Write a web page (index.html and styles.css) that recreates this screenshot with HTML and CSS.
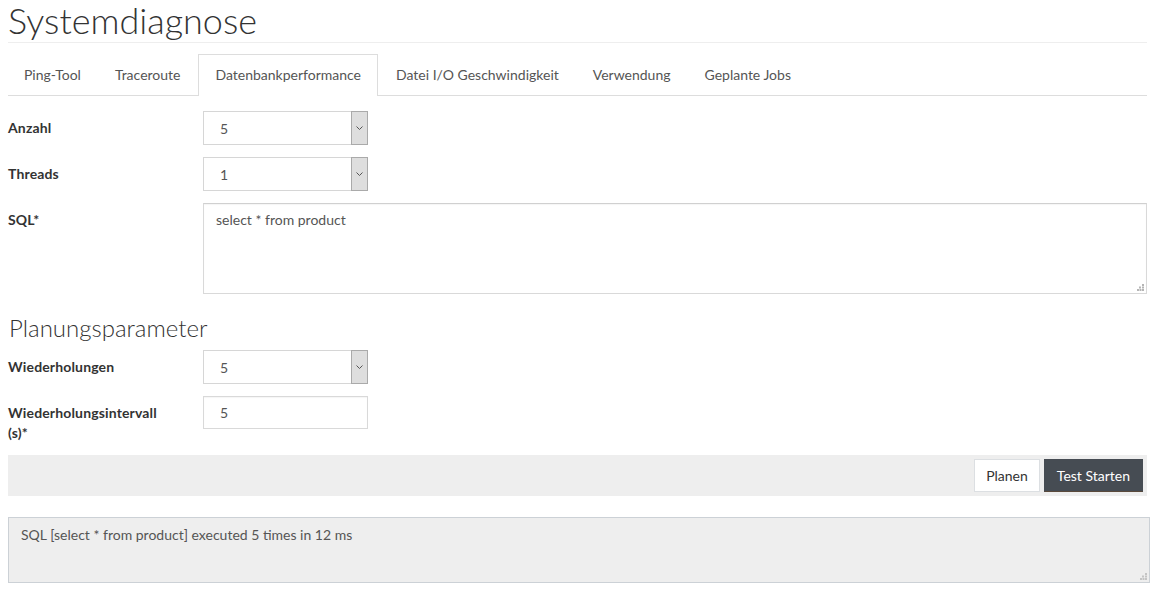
FILE: index.html
```html
<!DOCTYPE html>
<html lang="de">
<head>
<meta charset="utf-8">
<title>Systemdiagnose</title>
<link rel="stylesheet" href="styles.css">
</head>
<body>
<div class="page">
  <h1 class="title">Systemdiagnose</h1>
  <ul class="tabs">
    <li><a>Ping-Tool</a></li>
    <li><a>Traceroute</a></li>
    <li class="active"><a>Datenbankperformance</a></li>
    <li><a>Datei I/O Geschwindigkeit</a></li>
    <li><a>Verwendung</a></li>
    <li><a>Geplante Jobs</a></li>
  </ul>
  <form class="form">
    <div class="row">
      <label class="lbl">Anzahl</label>
      <div class="select"><select><option>5</option></select><span class="arrow"><svg width="9" height="6" viewBox="0 0 9 6"><path d="M1.5 1.5l3 3 3-3" fill="none" stroke="#555" stroke-width="1"/></svg></span></div>
    </div>
    <div class="row">
      <label class="lbl">Threads</label>
      <div class="select"><select><option>1</option></select><span class="arrow"><svg width="9" height="6" viewBox="0 0 9 6"><path d="M1.5 1.5l3 3 3-3" fill="none" stroke="#555" stroke-width="1"/></svg></span></div>
    </div>
    <div class="row row-sql">
      <label class="lbl">SQL*</label>
      <div class="area">
        <textarea class="sql">select * from product</textarea>
        <span class="grip"><svg width="7" height="7" viewBox="0 0 7 7"><g fill="#b5b5b5"><rect x="5" y="0" width="2" height="2"/><rect x="2" y="2.5" width="2" height="2"/><rect x="5" y="2.5" width="2" height="2"/><rect x="0" y="5" width="2" height="2"/><rect x="2.5" y="5" width="2" height="2"/><rect x="5" y="5" width="2" height="2"/></g></svg></span>
      </div>
    </div>
    <h3 class="section">Planungsparameter</h3>
    <div class="row">
      <label class="lbl">Wiederholungen</label>
      <div class="select"><select><option>5</option></select><span class="arrow"><svg width="9" height="6" viewBox="0 0 9 6"><path d="M1.5 1.5l3 3 3-3" fill="none" stroke="#555" stroke-width="1"/></svg></span></div>
    </div>
    <div class="row row-last">
      <label class="lbl">Wiederholungsintervall (s)*</label>
      <input class="text" type="text" value="5">
    </div>
    <div class="actions">
      <button type="button" class="btn btn-light">Planen</button>
      <button type="button" class="btn btn-dark">Test Starten</button>
    </div>
    <div class="area area-result">
      <textarea class="result" readonly>SQL [select * from product] executed 5 times in 12 ms</textarea>
      <span class="grip"><svg width="7" height="7" viewBox="0 0 7 7"><g fill="#c4c4c4"><rect x="5" y="0" width="2" height="2"/><rect x="2" y="2.5" width="2" height="2"/><rect x="5" y="2.5" width="2" height="2"/><rect x="0" y="5" width="2" height="2"/><rect x="2.5" y="5" width="2" height="2"/><rect x="5" y="5" width="2" height="2"/></g></svg></span>
    </div>
  </form>
</div>
</body>
</html>
```

FILE: styles.css
```css
html, body {
  margin: 0;
  padding: 0;
  background: #fff;
}
body {
  font-family: Lato, "Open Sans", sans-serif;
  font-size: 14px;
  line-height: 20px;
  color: #555;
}
.page {
  padding: 0 10px 0 8px;
}
.title {
  margin: 0;
  font-size: 36px;
  font-weight: 300;
  line-height: 40px;
  color: #333;
  padding-bottom: 2px;
  border-bottom: 1px solid #eee;
}
.tabs {
  list-style: none;
  margin: 11px 0 0;
  padding: 0;
  display: flex;
  border-bottom: 1px solid #ddd;
}
.tabs li {
  margin-bottom: -1px;
  margin-right: 2px;
}
.tabs a {
  display: block;
  padding: 10px 15px 11px;
  line-height: 20px;
  border: 1px solid transparent;
  border-bottom: none;
  color: #555;
  font-size: 14px;
}
.tabs li.active a {
  border-color: #ddd;
  background: #fff;
  padding-left: 16px;
  padding-right: 16px;
}
.form {
  padding-top: 15px;
}
.row {
  display: grid;
  grid-template-columns: 195px 1fr;
  align-items: start;
  margin-bottom: 12px;
}
.lbl {
  font-weight: 700;
  font-size: 14px;
  color: #333;
  padding-top: 7px;
  line-height: 20px;
  padding-right: 30px;
  letter-spacing: 0.15px;
}
.select {
  position: relative;
  width: 165px;
  height: 34px;
}
.select select {
  appearance: none;
  -webkit-appearance: none;
  width: 165px;
  height: 34px;
  margin: 0;
  border: 1px solid #d6d6d6;
  border-radius: 0;
  background: #fff;
  padding: 0 0 0 16px;
  font-family: Lato, sans-serif;
  font-size: 14px;
  color: #555;
  box-sizing: border-box;
}
.select .arrow {
  position: absolute;
  right: 0;
  top: 0;
  width: 17px;
  height: 34px;
  box-sizing: border-box;
  background: #dedede;
  border: 1px solid #aaa;
  display: flex;
  align-items: center;
  justify-content: center;
}
.area {
  position: relative;
}
.grip {
  position: absolute;
  right: 3px;
  bottom: 3px;
  width: 7px;
  height: 7px;
  display: flex;
  pointer-events: none;
}
.sql {
  display: block;
  width: 100%;
  height: 91px;
  margin: 0;
  box-sizing: border-box;
  border: 1px solid #d9d9d9;
  border-top-color: #d0d0d0;
  padding: 6px 12px;
  font-family: Lato, sans-serif;
  font-size: 14px;
  line-height: 20px;
  color: #555;
  resize: none;
  box-shadow: inset 0 1px 1px rgba(0,0,0,0.04);
}
.row-sql {
  margin-bottom: 21px;
}
.section {
  margin: 0 0 9px;
  padding-left: 1px;
  font-size: 24px;
  font-weight: 300;
  line-height: 26px;
  color: #333;
}
.text {
  width: 165px;
  height: 33px;
  box-sizing: border-box;
  margin: 0;
  border: 1px solid #d9d9d9;
  padding: 0 0 0 16px;
  font-family: Lato, sans-serif;
  font-size: 14px;
  color: #555;
  box-shadow: inset 0 1px 1px rgba(0,0,0,0.04);
}
.row-last {
  margin-bottom: 12px;
}
.actions {
  box-sizing: border-box;
  height: 41px;
  background: #eee;
  padding: 0 4px;
  display: flex;
  align-items: center;
  justify-content: flex-end;
  gap: 4px;
}
.btn {
  height: 33px;
  font-family: Lato, sans-serif;
  font-size: 14px;
  line-height: 20px;
  padding: 0 12px;
  border-radius: 0;
  cursor: pointer;
}
.btn-light {
  background: #fff;
  border: 1px solid #dcdfe2;
  color: #333;
  padding: 0 11px;
}
.btn-dark {
  background: #464c53;
  border: 1px solid #464c53;
  border-bottom: 1px solid #5a4a3c;
  color: #fff;
}
.area-result {
  margin: 21px -3px 0 0;
}
.result {
  display: block;
  width: 100%;
  height: 66px;
  margin: 0;
  box-sizing: border-box;
  background: #eee;
  border: 1px solid #ccd1d6;
  padding: 7px 12px;
  font-family: Lato, sans-serif;
  font-size: 14px;
  line-height: 20px;
  color: #555;
  resize: none;
}
```
